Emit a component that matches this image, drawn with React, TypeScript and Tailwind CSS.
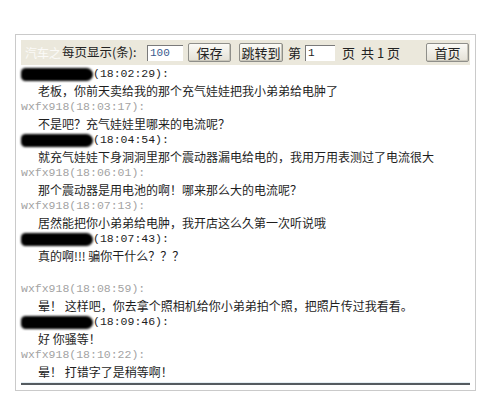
import React from 'react';

const cjk = { fontFamily: '"Noto Sans CJK SC", "Noto Sans", sans-serif' };
const mono = { fontFamily: '"Liberation Mono", "DejaVu Sans Mono", "Noto Sans CJK SC", monospace' };

type Row =
  | { kind: 'me'; time: string }
  | { kind: 'shop'; time: string }
  | { kind: 'msg'; text: string }
  | { kind: 'blank' };

const rows: Row[] = [
  { kind: 'me', time: '(18:02:29):' },
  { kind: 'msg', text: '老板，你前天卖给我的那个充气娃娃把我小弟弟给电肿了' },
  { kind: 'shop', time: 'wxfx918(18:03:17):' },
  { kind: 'msg', text: '不是吧？充气娃娃里哪来的电流呢？' },
  { kind: 'me', time: '(18:04:54):' },
  { kind: 'msg', text: '就充气娃娃下身洞洞里那个震动器漏电给电的，我用万用表测过了电流很大' },
  { kind: 'shop', time: 'wxfx918(18:06:01):' },
  { kind: 'msg', text: '那个震动器是用电池的啊！哪来那么大的电流呢？' },
  { kind: 'shop', time: 'wxfx918(18:07:13):' },
  { kind: 'msg', text: '居然能把你小弟弟给电肿，我开店这么久第一次听说哦' },
  { kind: 'me', time: '(18:07:43):' },
  { kind: 'msg', text: '真的啊!!! 骗你干什么？？？' },
  { kind: 'blank' },
  { kind: 'shop', time: 'wxfx918(18:08:59):' },
  { kind: 'msg', text: '晕！ 这样吧，你去拿个照相机给你小弟弟拍个照，把照片传过我看看。' },
  { kind: 'me', time: '(18:09:46):' },
  { kind: 'msg', text: '好 你骚等！' },
  { kind: 'shop', time: 'wxfx918(18:10:22):' },
  { kind: 'msg', text: '晕！ 打错字了是稍等啊！' },
];

function XpButton({ label, w }: { label: string; w: string }) {
  return (
    <button
      className={`${w} h-[19px] rounded-[2px] border border-[#8f8f8a] bg-gradient-to-b from-[#fbfaf6] to-[#e4e1d6] text-[13px] leading-none text-[#222] shadow-[inset_-1px_-1px_0_#c9c6ba]`}
      style={cjk}
    >
      {label}
    </button>
  );
}

function ChatRow({ row }: { row: Row }) {
  if (row.kind === 'blank') return <div className="h-[16.55px]" />;
  if (row.kind === 'msg')
    return (
      <div className="h-[16.55px] pl-[17px] text-[12px] leading-[16.55px] text-[#1e1e1e] whitespace-nowrap" style={cjk}>
        {row.text}
      </div>
    );
  if (row.kind === 'shop')
    return (
      <div className="h-[16.55px] text-[11.5px] leading-[16.55px] text-[#a3a3a3]" style={mono}>
        {row.time}
      </div>
    );
  return (
    <div className="flex h-[16.55px] items-center">
      <span className="h-[13px] w-[72px] rounded-l-[7px] rounded-r-[10px] bg-black blur-[1.2px]" />
      <span className="text-[11.5px] leading-[16.55px] text-[#1e1e1e]" style={mono}>
        {row.time}
      </span>
    </div>
  );
}

export default function App() {
  return (
    <div className="min-h-[415px] w-[496px] bg-white pl-[15px] pt-[34px]">
      <div className="w-[461px] border border-[#cacaca] px-[5px] pt-[5px] pb-[5px]">
        {/* toolbar */}
        <div className="flex h-[25px] items-center bg-[#ebe8dc] text-[12px] text-[#222]" style={cjk}>
          <span className="ml-[4px] w-[37px] overflow-hidden whitespace-nowrap text-[12px] text-white/80">汽车之</span>
          <span className="w-[85px] whitespace-nowrap text-[12.5px]">每页显示(条):</span>
          <div className="flex h-[16px] w-[36px] items-center border-t border-l border-[#7a7a7a] bg-white pl-[2px] text-[11px] text-[#3b5a8c]" style={mono}>
            100
          </div>
          <div className="ml-[5px]">
            <XpButton label="保存" w="w-[43px]" />
          </div>
          <div className="ml-[8px]">
            <XpButton label="跳转到" w="w-[44px]" />
          </div>
          <span className="ml-[5px] text-[13px]">第</span>
          <div className="ml-[4px] flex h-[16px] w-[30px] items-center border-t border-l border-[#7a7a7a] bg-white pl-[2px] text-[11px]" style={mono}>
            1
          </div>
          <span className="ml-[7px] text-[13px]">页</span>
          <span className="ml-[6px] text-[13px] whitespace-pre">共 1 页</span>
          <div className="ml-auto mr-[1px]">
            <XpButton label="首页" w="w-[43px]" />
          </div>
        </div>

        {/* chat log */}
        <div className="pt-[1px]">
          {rows.map((r, i) => (
            <ChatRow key={i} row={r} />
          ))}
        </div>
        <div className="mt-[2px] h-[1px] bg-[#e4eef4]" />
        <div className="h-[2px] bg-[#555b60]" />
      </div>
    </div>
  );
}
